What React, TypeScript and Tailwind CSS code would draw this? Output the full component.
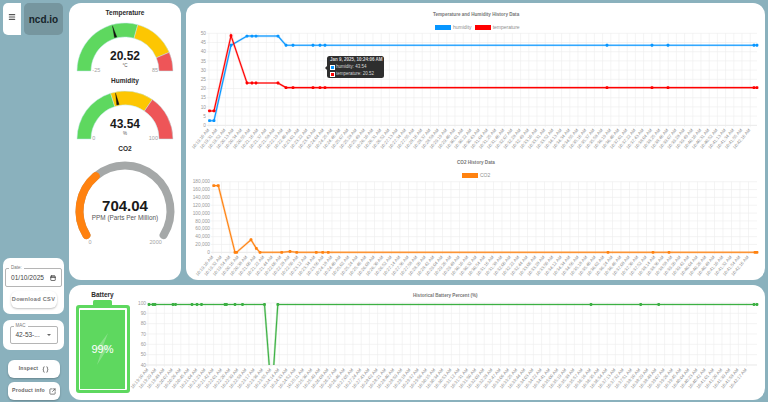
import { Braces, Calendar, Menu, SquareArrowOutUpRight } from "lucide-react";

type Pt = [number, number];

const GREY = "#a3a3a3";
const FONT = "'Liberation Sans', Arial, sans-serif";

function polar(cx: number, cy: number, r: number, deg: number): Pt {
  const a = (deg * Math.PI) / 180;
  return [cx - Math.cos(a) * r, cy - Math.sin(a) * r];
}

// donut slice between two fractions of the half circle
function slice(cx: number, cy: number, ro: number, ri: number, f0: number, f1: number) {
  const [x0, y0] = polar(cx, cy, ro, f0 * 180);
  const [x1, y1] = polar(cx, cy, ro, f1 * 180);
  const [x2, y2] = polar(cx, cy, ri, f1 * 180);
  const [x3, y3] = polar(cx, cy, ri, f0 * 180);
  return `M${x0} ${y0}A${ro} ${ro} 0 0 1 ${x1} ${y1}L${x2} ${y2}A${ri} ${ri} 0 0 0 ${x3} ${y3}Z`;
}

function HalfGauge({ value, unit, min, max, stops }: { value: string; unit: string; min: string; max: string; stops: [number, number] }) {
  const cx = 56;
  const cy = 54;
  const f = (Number(value) - Number(min)) / (Number(max) - Number(min));
  const [tx, ty] = polar(cx, cy, 47, f * 180);
  const [px, py] = polar(cx, cy, 35, f * 180 + 2);
  const [qx, qy] = polar(cx, cy, 35, f * 180 - 2);
  return (
    <svg viewBox="0 0 112 56" className="block h-[56px] w-[112px]" style={{ fontFamily: FONT }}>
      <path d={slice(cx, cy, 48, 34, 0, stops[0])} fill="#5ed85f" stroke="#bfe6ea" strokeWidth="0.5" />
      <path d={slice(cx, cy, 48, 34, stops[0], stops[1])} fill="#fdc602" stroke="#bfe6ea" strokeWidth="0.5" />
      <path d={slice(cx, cy, 48, 34, stops[1], 1)} fill="#ee5558" stroke="#bfe6ea" strokeWidth="0.5" />
      <path d={`M${tx} ${ty}L${px} ${py}L${qx} ${qy}Z`} fill="#111" stroke="#111" strokeWidth="0.3" />
      <text x={cx} y={42.5} textAnchor="middle" fontSize="12" fontWeight="700" fill="#1a1a1a">{value}</text>
      <text x={cx} y={49.5} textAnchor="middle" fontSize="4.5" fill="#555">{unit}</text>
      <text x={23.3} y={54.5} fontSize="5.5" fill={GREY}>{min}</text>
      <text x={89} y={54.5} textAnchor="end" fontSize="5.5" fill={GREY}>{max}</text>
    </svg>
  );
}

function Co2Gauge() {
  const cx = 56;
  const cy = 58;
  const r = 45.5;
  const [x0, y0] = polar(cx, cy, r, -32);
  const [x1, y1] = polar(cx, cy, r, 212);
  const [xm, ym] = polar(cx, cy, r, 50);
  return (
    <svg viewBox="0 0 112 104" className="block h-[104px] w-[112px]" style={{ fontFamily: FONT }}>
      <path d={`M${x0} ${y0}A${r} ${r} 0 1 1 ${x1} ${y1}`} fill="none" stroke="#a5a8a8" strokeWidth="8" strokeLinecap="round" />
      <path d={`M${x0} ${y0}A${r} ${r} 0 0 1 ${xm} ${ym}`} fill="none" stroke="#ff8210" strokeWidth="8" strokeLinecap="round" />
      <text x={cx} y={58.4} textAnchor="middle" fontSize="15" fontWeight="700" fill="#1a1a1a">704.04</text>
      <text x={cx} y={66.5} textAnchor="middle" fontSize="6.4" fill="#555">PPM (Parts Per Million)</text>
      <text x={21} y={91.3} textAnchor="middle" fontSize="5.5" fill={GREY}>0</text>
      <text x={86.7} y={91.3} textAnchor="middle" fontSize="5.5" fill={GREY}>2000</text>
    </svg>
  );
}

function clock(startSec: number) {
  const h = Math.floor(startSec / 3600);
  const m = Math.floor((startSec % 3600) / 60);
  const s = startSec % 60;
  return `${h}:${String(m).padStart(2, "0")}:${String(s).padStart(2, "0")} AM`;
}

type Series = { color: string; pts: Pt[]; noDots?: boolean };

function Chart({
  box,
  left,
  right,
  top,
  bottom,
  yTicks,
  labelX,
  step,
  count,
  spacing,
  series,
}: {
  box: [number, number, number, number];
  left: number;
  right: number;
  top: number;
  bottom: number;
  yTicks: string[];
  labelX: number;
  step: number;
  count: number;
  spacing: number;
  series: Series[];
}) {
  const start = 10 * 3600 + 19 * 60 + 10;
  const rowH = (bottom - top) / (yTicks.length - 1);
  const xs = Array.from({ length: count + 1 }, (_, i) => left + i * spacing);
  return (
    <svg
      viewBox={box.join(" ")}
      className="block"
      style={{ width: box[2], height: box[3], fontFamily: FONT }}
    >
      {yTicks.map((t, i) => (
        <g key={t}>
          <line x1={left - 2} x2={right} y1={top + i * rowH} y2={top + i * rowH} stroke={i === yTicks.length - 1 ? "#d8d8d8" : "#ececec"} strokeWidth="0.6" />
          <text x={labelX} y={top + i * rowH + 1.7} textAnchor="end" fontSize="4.8" fill="#9a9a9a">{t}</text>
        </g>
      ))}
      {xs.map((x, i) => (
        <g key={x}>
          <line x1={x} x2={x} y1={top} y2={bottom + 2} stroke="#ececec" strokeWidth="0.6" />
          <text
            x={x + 0.5}
            y={bottom + 5}
            textAnchor="end"
            fontSize="4.4"
            fill="#8c8c8c"
            transform={`rotate(-50 ${x + 0.5} ${bottom + 5})`}
          >
            {clock(start + i * step)}
          </text>
        </g>
      ))}
      {series.map((s, n) => (
        <g key={n}>
          <polyline
            points={s.pts.map((p) => p.join(",")).join(" ")}
            fill="none"
            stroke={s.color}
            strokeOpacity="0.3"
            strokeWidth="2.2"
          />
          <polyline
            points={s.pts.map((p) => p.join(",")).join(" ")}
            fill="none"
            stroke={s.color}
            strokeWidth="1.1"
          />
          {!s.noDots &&
            s.pts.map((p) => (
              <rect key={p.join()} x={p[0] - 1.4} y={p[1] - 1.4} width="2.8" height="2.8" rx="0.8" fill={s.color} />
            ))}
        </g>
      ))}
    </svg>
  );
}

const T_X = [209.5, 214, 231, 247, 252, 256, 278, 286, 293, 313, 320, 325, 607, 652, 668, 754, 757];
const H_V = [2.5, 2.5, 43.5, 48.5, 48.5, 48.5, 48.5, 43.5, 43.5, 43.5, 43.5, 43.5, 43.5, 43.5, 43.5, 43.5, 43.5];
const T_V = [7.8, 7.8, 48.7, 23, 23, 23, 23, 20.5, 20.5, 20.5, 20.5, 20.5, 20.5, 20.5, 20.5, 20.5, 20.5];
const toY1 = (v: number) => 125.3 - (v / 50) * 92;

const humidity: Pt[] = T_X.map((x, i) => [x, toY1(H_V[i])]);
const temperature: Pt[] = T_X.map((x, i) => [x, toY1(T_V[i])]);

const toY2 = (v: number) => 252.3 - (v / 180000) * 70.6;
const co2: Pt[] = (
  [
    [213.7, 170000],
    [218.3, 170000],
    [235, 0],
    [236.6, 0],
    [251, 32000],
    [256.3, 10000],
    [260, 0],
    [281.7, 0],
    [290, 2000],
    [296.7, 0],
    [316.3, 0],
    [322.7, 0],
    [328.3, 0],
    [608, 0],
    [653, 0],
    [669, 0],
    [755, 0],
    [757, 0],
  ] as Pt[]
).map(([x, v]) => [x, toY2(v)]);

const batteryTop = 304.5;
const batteryA: Pt[] = [149, 153, 155, 173, 175.5, 192, 197, 201.5, 225, 226.5, 235, 242.5, 264.5].map((x) => [x, batteryTop]);
const batteryDrop: Pt[] = [[264.5, batteryTop], [269.2, 365]];
const batteryRise: Pt[] = [[273.8, 365], [277.8, batteryTop]];
const batteryB: Pt[] = [277.8, 591, 640.7, 658.7, 754, 757].map((x) => [x, batteryTop]);

function Legend({ items }: { items: { color: string; label: string }[] }) {
  return (
    <div className="absolute flex items-center gap-[3px] text-[5px] leading-none text-[#8f8f8f]">
      {items.map((it) => (
        <span key={it.label} className="flex items-center gap-[2px]">
          <span className="h-[5px] w-[16px]" style={{ background: it.color }} />
          {it.label}
        </span>
      ))}
    </div>
  );
}

function SideButton({ label, icon }: { label: string; icon: React.ReactNode }) {
  return (
    <button className="mx-[5px] flex h-[18px] w-[52px] items-center justify-center gap-[4px] rounded-[6px] bg-white text-[5.2px] font-bold tracking-[0.2px] text-[#666] shadow-[0_1px_2px_rgba(0,0,0,0.25)]">
      {label}
      {icon}
    </button>
  );
}

export default function App() {
  return (
    <div
      className="flex h-[402px] w-[768px] gap-[5px] overflow-hidden bg-[#8ab1bd] pb-[2px] pl-[3px] pt-[3px]"
      style={{ fontFamily: FONT }}
    >
      {/* sidebar */}
      <aside className="flex w-[61px] flex-col">
        <div className="flex h-[32px] gap-[3px]">
          <button className="flex h-[32px] w-[18px] items-start justify-center rounded-l-[5px] bg-white pt-[10px]">
            <Menu size={8} strokeWidth={3.5} className="text-[#555]" />
          </button>
          <div className="flex h-[32px] w-[39px] items-center justify-center rounded-[5px] bg-[#76969f] text-[10px] font-bold text-[#16242a]">
            ncd.io
          </div>
        </div>

        <div className="mt-auto flex h-[56px] flex-col items-center rounded-[7px] bg-white pt-[10px]">
          <div className="relative flex h-[19px] w-[57px] items-center justify-between rounded-[2px] border border-[#b5b5b5] px-[5px] text-[6.6px] text-[#444]">
            <span className="absolute -top-[3px] left-[3px] bg-white px-[2px] text-[4.5px] leading-none text-[#777]">Date:</span>
            01/10/2025
            <Calendar size={6} strokeWidth={2.5} className="text-[#222]" />
          </div>
          <button className="mt-[4px] h-[17px] w-[46px] rounded-[6px] bg-white text-[5.6px] font-bold tracking-[0.3px] text-[#777] shadow-[0_1px_2px_rgba(0,0,0,0.25)]">
            Download CSV
          </button>
        </div>

        <div className="mt-[6px] flex h-[30px] items-center justify-center rounded-[7px] bg-white">
          <div className="relative flex h-[18px] w-[48px] items-center justify-between rounded-[2px] border border-[#b5b5b5] pl-[5px] pr-[6px] text-[6.5px] text-[#444]">
            <span className="absolute -top-[3px] left-[3px] bg-white px-[2px] text-[4.5px] leading-none text-[#777]">MAC</span>
            42-53-...
            <span className="h-0 w-0 border-x-[2px] border-t-[2px] border-x-transparent border-t-[#666]" />
          </div>
        </div>

        <div className="mt-[10px] flex flex-col gap-[4px]">
          <SideButton label="Inspect" icon={<Braces size={7} strokeWidth={2.5} className="text-[#555]" />} />
          <SideButton label="Product info" icon={<SquareArrowOutUpRight size={7} strokeWidth={2.5} className="text-[#555]" />} />
        </div>
      </aside>

      {/* main */}
      <div className="flex w-[696px] flex-col gap-[5px]">
        <div className="flex h-[277px] gap-[5px]">
          <section className="flex w-[112px] flex-col items-center rounded-[12px] bg-white pt-[6px]">
            <h3 className="h-[8px] text-[6.5px] font-bold leading-[8px] text-[#2b2b2b]">Temperature</h3>
            <HalfGauge value="20.52" unit="°C" min="-25" max="85" stops={[0.586, 0.873]} />
            <h3 className="mt-[4px] h-[8px] text-[6.5px] font-bold leading-[8px] text-[#2b2b2b]">Humidity</h3>
            <HalfGauge value="43.54" unit="%" min="0" max="100" stops={[0.403, 0.693]} />
            <h3 className="mt-[4px] h-[8px] text-[6.5px] font-bold leading-[8px] text-[#2b2b2b]">CO2</h3>
            <Co2Gauge />
          </section>

          <section className="relative w-[579px] overflow-hidden rounded-[12px] bg-white">
            <div className="pointer-events-none absolute left-[247px] top-[10px] text-[4.6px] font-bold leading-none text-[#777]">
              Temperature and Humidity History Data
            </div>
            <div className="absolute left-[249px] top-[22px] h-0">
              <Legend
                items={[
                  { color: "#0796ff", label: "humidity" },
                  { color: "#ff0000", label: "temperature" },
                ]}
              />
            </div>
            <Chart
              box={[186, 3, 579, 152]}
              left={209}
              right={757}
              top={33.3}
              bottom={125.3}
              labelX={206}
              yTicks={["50", "45", "40", "35", "30", "25", "20", "15", "10", "5", "0"]}
              step={21}
              count={66}
              spacing={8.2}
              series={[
                { color: "#0796ff", pts: humidity },
                { color: "#ff0000", pts: temperature },
              ]}
            />
            <div className="pointer-events-none absolute left-[271px] top-[158px] text-[4.6px] font-bold leading-none text-[#777]">
              CO2 History Data
            </div>
            <div className="absolute left-[276px] top-[170px] h-0">
              <Legend items={[{ color: "#ff8210", label: "CO2" }]} />
            </div>
            <Chart
              box={[186, 155, 579, 125]}
              left={213}
              right={757}
              top={181.7}
              bottom={252.3}
              labelX={210}
              yTicks={["180,000", "160,000", "140,000", "120,000", "100,000", "80,000", "60,000", "40,000", "20,000", "0"]}
              step={22}
              count={63}
              spacing={8.5}
              series={[{ color: "#ff8210", pts: co2 }]}
            />
            {/* hover tooltip */}
            <div className="absolute left-[141px] top-[53px] flex h-[22px] w-[57px] flex-col justify-center gap-[1px] rounded-[2.5px] bg-[#2e2e2e] pl-[3px] text-[4.5px] leading-[6px] text-[#d8d8d8]">
              <span className="absolute -left-[2px] top-[10px] h-0 w-0 border-y-[2px] border-r-[2px] border-y-transparent border-r-[#2e2e2e]" />
              <span className="font-bold">Jan 9, 2025, 10:24:06 AM</span>
              <span className="flex items-center gap-[1px]">
                <span className="h-[5px] w-[5px] border-[0.5px] border-white bg-[#0796ff]" />
                humidity: 43.54
              </span>
              <span className="flex items-center gap-[1px]">
                <span className="h-[5px] w-[5px] border-[0.5px] border-white bg-[#ff0000]" />
                temperature: 20.52
              </span>
            </div>
          </section>
        </div>

        <section className="relative flex h-[115px] rounded-[12px] bg-white">
          <div className="flex w-[61px] flex-col items-center pl-[6px] pt-[6px]">
            <h3 className="h-[8px] text-[6.5px] font-bold leading-[8px] text-[#2b2b2b]">Battery</h3>
            <div className="mt-[1px] h-[5px] w-[19px] rounded-t-[1.5px] bg-[#5ed85f]" />
            <div className="flex h-[88px] w-[54px] rounded-[3px] bg-[#5ed85f] p-[3px]">
              <div className="flex flex-1 rounded-[1px] bg-white p-[1.5px]">
                <div className="relative flex flex-1 items-center justify-center bg-[#5ed85f]">
                  <svg viewBox="0 0 24 46" className="absolute h-[32px] w-[17px] text-white opacity-25">
                    <path d="M20 0 L2 24 H11 L4 46 L22 18 H13 Z" fill="currentColor" />
                  </svg>
                  <span className="relative text-[11px] text-white">99%</span>
                </div>
              </div>
            </div>
          </div>
          <div className="absolute left-[344px] top-[9px] text-[4.6px] font-bold leading-none text-[#777]">
            Historical Battery Percent (%)
          </div>
          <div className="absolute left-[61px] top-0">
            <Chart
              box={[130, 285, 635, 115]}
              left={148}
              right={757}
              top={303}
              bottom={365}
              labelX={146}
              yTicks={["100", "90", "80", "70", "60", "50", "40"]}
              step={19}
              count={73}
              spacing={8.2}
              series={[
                { color: "#3cb043", pts: batteryA },
                { color: "#3cb043", pts: batteryDrop, noDots: true },
                { color: "#3cb043", pts: batteryRise, noDots: true },
                { color: "#3cb043", pts: batteryB },
              ]}
            />
          </div>
        </section>
      </div>
    </div>
  );
}
